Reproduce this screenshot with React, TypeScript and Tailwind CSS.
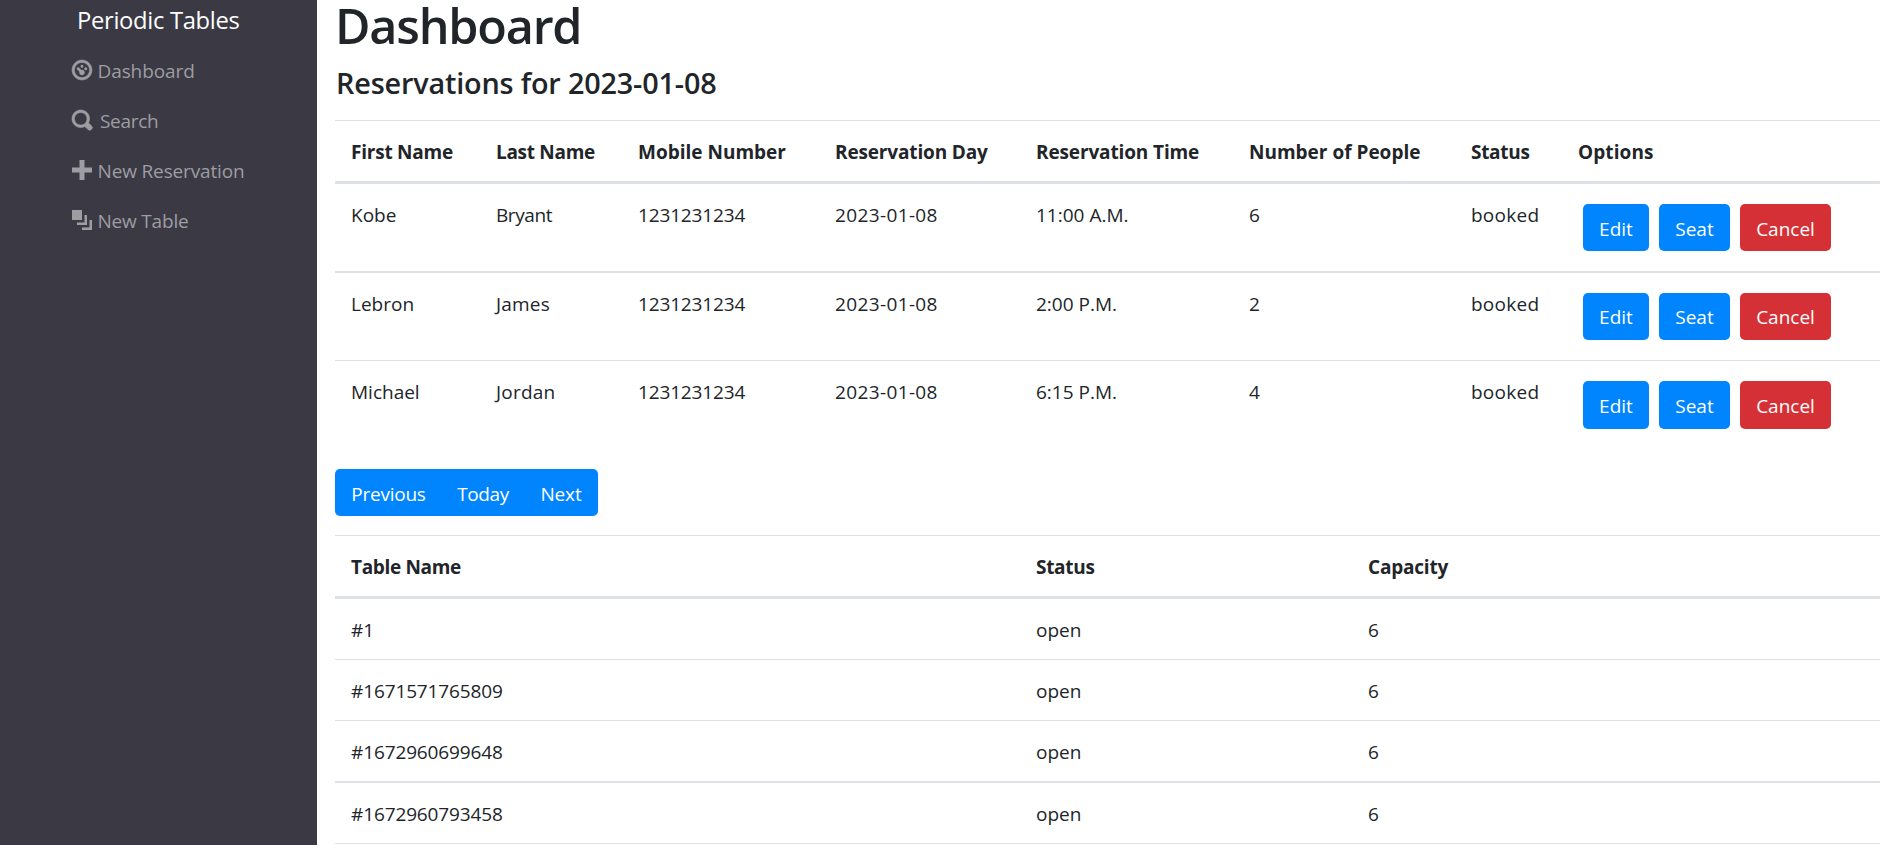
import type { ReactNode } from "react";

const navItems = [
  {
    label: "Dashboard",
    text: "ml-[5.5px] tracking-[-0.1px]",
    stroke: 0.2,
    d: "M4 0c-2.2 0-4 1.8-4 4s1.8 4 4 4 4-1.8 4-4-1.8-4-4-4zm0 1c1.66 0 3 1.34 3 3s-1.34 3-3 3-3-1.34-3-3 1.34-3 3-3zm0 1c-.28 0-.5.22-.5.5s.22.5.5.5.5-.22.5-.5-.22-.5-.5-.5zm-1.66 1a.5.5 0 0 0-.19.84l.91.91c-.02.08-.06.16-.06.25 0 .55.45 1 1 1s1-.45 1-1-.45-1-1-1c-.09 0-.17.04-.25.06l-.91-.91a.5.5 0 0 0-.44-.16.5.5 0 0 0-.06 0zm3.16 0c-.28 0-.5.22-.5.5s.22.5.5.5.5-.22.5-.5-.22-.5-.5-.5z",
  },
  {
    label: "Search",
    text: "ml-[8px] tracking-[-0.3px]",
    stroke: 0.25,
    d: "M3.5 0c-1.93 0-3.5 1.57-3.5 3.5s1.57 3.5 3.5 3.5c.59 0 1.17-.14 1.66-.41a1 1 0 0 0 .13.13l1 1a1.02 1.02 0 1 0 1.44-1.44l-1-1a1 1 0 0 0-.16-.13c.27-.49.44-1.06.44-1.66 0-1.93-1.55-3.5-3.5-3.5zm0 1c1.39 0 2.5 1.11 2.5 2.5 0 .66-.24 1.27-.66 1.72l-.03.03a1 1 0 0 0-.13.13c-.44.4-1.04.63-1.69.63-1.39 0-2.5-1.11-2.5-2.5s1.11-2.5 2.5-2.5z",
  },
  {
    label: "New Reservation",
    text: "ml-[5.5px] tracking-[-0.15px]",
    stroke: 0,
    d: "M3 0v3h-3v2h3v3h2v-3h3v-2h-3v-3h-2z",
  },
  {
    label: "New Table",
    text: "ml-[5.5px] tracking-[-0.2px]",
    stroke: 0,
    d: "M0 0v4h4v-4h-4zm5 2v3h-3v1h4v-4h-1zm2 2v3h-3v1h4v-4h-1z",
  },
];

const reservations = [
  { first: "Kobe", last: "Bryant", lastText: "tracking-[-0.4px]", mobile: "1231231234", day: "2023-01-08", time: "11:00 A.M.", people: 6, status: "booked", row: "h-[87px]", button: "h-[47px] pt-[3px]" },
  { first: "Lebron", last: "James", lastText: "tracking-[0.2px]", mobile: "1231231234", day: "2023-01-08", time: "2:00 P.M.", people: 2, status: "booked", row: "h-[89px] border-t-2", button: "h-[47px] pt-px" },
  { first: "Michael", last: "Jordan", lastText: "tracking-[0.2px]", mobile: "1231231234", day: "2023-01-08", time: "6:15 P.M.", people: 4, status: "booked", row: "h-[89px] border-t", button: "h-12 pt-0.5" },
];

const tables = [
  { name: "#1", status: "open", capacity: 6, row: "h-[60px]" },
  { name: "#1671571765809", status: "open", capacity: 6, row: "h-[61px] border-t" },
  { name: "#1672960699648", status: "open", capacity: 6, row: "h-[61px] border-t" },
  { name: "#1672960793458", status: "open", capacity: 6, row: "h-[62px] border-t-2" },
];

const reservationColumns =
  "grid grid-cols-[145px_142px_197px_201px_213px_222px_107px_1fr] pl-4 border-[#dee2e6]";
const tableColumns = "grid grid-cols-[685px_332px_1fr] pl-4 border-[#dee2e6]";

function Cell({ children, className = "" }: { children: ReactNode; className?: string }) {
  return <div className={`pt-4 ${className}`}>{children}</div>;
}

function Button({ children, className }: { children: ReactNode; className: string }) {
  return (
    <button className={`block rounded-[5px] text-center text-white ${className}`}>
      {children}
    </button>
  );
}

function Sidebar() {
  return (
    <aside className="h-full w-[317px] shrink-0 bg-[#3b3a44]">
      <div className="mb-[7px] pt-px pl-[77px] text-[23.75px] leading-[38px] tracking-[-0.31px] text-white">
        Periodic Tables
      </div>
      <nav>
        {navItems.map((item) => (
          <a key={item.label} className="flex h-[50px] items-center pl-[72px] leading-[50px] text-[#9d9da2]">
            <svg
              viewBox="0 0 8 8"
              className="-mt-0.5 size-5 overflow-visible"
              fill="currentColor"
              stroke="currentColor"
              strokeWidth={item.stroke}
            >
              <path d={item.d} />
            </svg>
            <span className={item.text}>{item.label}</span>
          </a>
        ))}
      </nav>
    </aside>
  );
}

export default function App() {
  return (
    <div className="flex h-[845px] w-[1897px] overflow-hidden bg-white font-['Open_Sans','Noto_Sans',sans-serif] text-[19px] leading-[30px] text-[#212529]">
      <Sidebar />
      <main className="ml-[18px] w-[1545px]">
        <h1 className="text-[48.5px] leading-[50px] font-semibold tracking-[-1.2px]">Dashboard</h1>
        <h2 className="mt-[14px] mb-[19px] pl-px text-[28.8px] leading-[37px] font-semibold tracking-[-0.17px]">
          Reservations for 2023-01-08
        </h2>

        <section>
          <div className={`${reservationColumns} h-16 border-t border-b-3 font-bold`}>
            <Cell className="tracking-[-0.23px]">First Name</Cell>
            <Cell className="tracking-[-0.3px]">Last Name</Cell>
            <Cell>Mobile Number</Cell>
            <Cell className="tracking-[-0.15px]">Reservation Day</Cell>
            <Cell className="tracking-[-0.13px]">Reservation Time</Cell>
            <Cell>Number of People</Cell>
            <Cell className="tracking-[-0.3px]">Status</Cell>
            <Cell className="tracking-[0.1px]">Options</Cell>
          </div>
          {reservations.map((r) => (
            <div key={r.first} className={`${reservationColumns} ${r.row}`}>
              <Cell>{r.first}</Cell>
              <Cell className={r.lastText}>{r.last}</Cell>
              <Cell className="tracking-[-0.15px]">{r.mobile}</Cell>
              <Cell className="tracking-[0.37px]">{r.day}</Cell>
              <Cell>{r.time}</Cell>
              <Cell>{r.people}</Cell>
              <Cell className="tracking-[0.25px]">{r.status}</Cell>
              <div className="flex items-start gap-2.5 pt-5 pl-[5px]">
                <Button className={`w-[66px] bg-[#0085ff] ${r.button}`}>Edit</Button>
                <Button className={`w-[71px] bg-[#0085ff] ${r.button}`}>Seat</Button>
                <Button className={`w-[91px] bg-[#d63037] ${r.button}`}>Cancel</Button>
              </div>
            </div>
          ))}
        </section>

        <div className="mt-5 mb-[19px] flex w-[263px] overflow-hidden rounded-[5px] bg-[#0085ff]">
          <Button className="h-[47px] w-[107px] pt-[3px] tracking-[-0.25px]">Previous</Button>
          <Button className="h-[47px] w-[82px] pt-[3px] tracking-[-0.4px]">Today</Button>
          <Button className="h-[47px] w-[74px] pt-[3px] tracking-[-0.14px]">Next</Button>
        </div>

        <section className="border-b border-[#dee2e6]">
          <div className={`${tableColumns} h-16 border-t border-b-3 font-bold`}>
            <Cell className="tracking-[-0.34px]">Table Name</Cell>
            <Cell className="tracking-[-0.3px]">Status</Cell>
            <Cell className="tracking-[-0.2px]">Capacity</Cell>
          </div>
          {tables.map((t) => (
            <div key={t.name} className={`${tableColumns} ${t.row}`}>
              <Cell className="tracking-[-0.12px]">{t.name}</Cell>
              <Cell>{t.status}</Cell>
              <Cell>{t.capacity}</Cell>
            </div>
          ))}
        </section>
      </main>
    </div>
  );
}
